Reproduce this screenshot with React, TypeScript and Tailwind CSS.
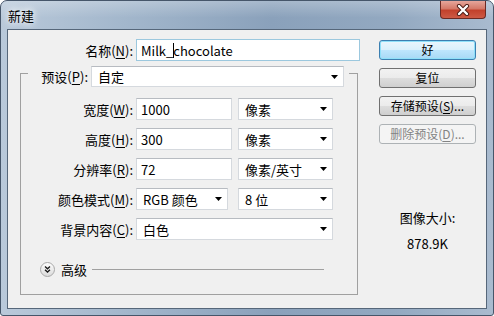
import React from 'react'

const ui = "font-['Noto_Sans_CJK_SC','Liberation_Sans',sans-serif] text-[13px] leading-[15px] text-black"

const Key = ({ k }: { k: string }) => <u className="underline underline-offset-[2px]">{k}</u>

const Label = ({ text, k, w }: { text: string; k: string; w: string }) => (
  <div className={`${w} shrink-0 text-right whitespace-nowrap`}>
    {text}(<Key k={k} />):
  </div>
)

const Arrow = () => (
  <svg width="7" height="4" viewBox="0 0 7 4" className="shrink-0">
    <path d="M0 0h7L3.5 4z" fill="#000" />
  </svg>
)

const Field = ({ value, w }: { value: string; w: string }) => (
  <div className={`${w} h-[22px] shrink-0 bg-white border border-[#d5d9de] border-t-[#b7bbc1] flex items-center pl-[4px]`}>
    {value}
  </div>
)

const Combo = ({ value, w, h = 'h-[22px]' }: { value: string; w: string; h?: string }) => (
  <div className={`${w} ${h} shrink-0 bg-white border border-[#d5d9de] border-t-[#b7bbc1] flex items-center pl-[6px] pr-[5px]`}>
    <span className="flex-1 whitespace-nowrap">{value}</span>
    <Arrow />
  </div>
)

const Button = ({ children, kind = 'normal' }: { children: React.ReactNode; kind?: 'normal' | 'default' | 'disabled' }) => {
  const styles = {
    normal: 'border-[#707070] bg-[linear-gradient(180deg,#f2f2f2_0%,#ebebeb_50%,#dddddd_51%,#cfcfcf_100%)] text-black',
    default:
      'border-[#3c7fb1] bg-[linear-gradient(180deg,#eaf6fd_0%,#d9f0fc_50%,#bee6fd_51%,#a7d9f5_100%)] shadow-[inset_0_0_0_1px_#8fe0f9] text-black',
    disabled: 'border-[#adb2b5] bg-[#f4f4f4] text-[#838383]',
  }
  return (
    <div className={`w-[97px] h-[20px] rounded-[3px] border flex items-center justify-center whitespace-nowrap text-[12px] leading-[14px] ${styles[kind]}`}>
      {children}
    </div>
  )
}

const dimensionRows = [
  { label: '宽度', k: 'W', value: '1000', unit: '像素' },
  { label: '高度', k: 'H', value: '300', unit: '像素' },
  { label: '分辨率', k: 'R', value: '72', unit: '像素/英寸' },
]

const App = () => {
  return (
    <div className={`w-[494px] h-[316px] ${ui}`}>
      <div className="w-full h-full flex flex-col border border-[#46566a] rounded-t-[7px] rounded-b-[3px] overflow-hidden bg-[linear-gradient(90deg,#b9c9da_0%,#a3b7cc_25%,#8aa1bb_55%,#93a9c1_80%,#a9bbcf_100%)]">
        {/* title bar */}
        <div className="h-[28px] shrink-0 flex items-start justify-between bg-[linear-gradient(180deg,rgba(255,255,255,0.25)_0%,rgba(255,255,255,0)_60%)]">
          <div className="pl-[7px] pt-[7px] [text-shadow:0_0_6px_#fff,0_0_10px_#fff]">新建</div>
          <div className="mr-[7px] w-[46px] h-[18px] rounded-b-[4px] border border-t-0 border-[#6b2a24] bg-[linear-gradient(180deg,#e6a69b_0%,#d47968_45%,#c2412c_55%,#cd5a45_100%)] flex items-center justify-center">
            <svg width="14" height="12" viewBox="0 0 14 12">
              <path d="M3 2L11 10M11 2L3 10" stroke="#4a1a14" strokeWidth="4.2" strokeLinecap="round" />
              <path d="M3 2L11 10M11 2L3 10" stroke="#fff" strokeWidth="2.4" strokeLinecap="round" />
            </svg>
          </div>
        </div>

        {/* client area */}
        <div className="mx-[6px] h-[280px] shrink-0 border border-[#56677a] bg-[#f0f0f0] flex">
          {/* left column */}
          <div className="flex flex-col">
            <div className="mt-[9px] flex items-center">
              <Label text="名称" k="N" w="w-[125px]" />
              <div className="ml-[3px] w-[224px] h-[22px] bg-white border border-[#9cc8de] flex items-center pl-[4px] whitespace-nowrap">
                Milk_<span className="inline-block w-px h-[15px] bg-black mr-[-1px]" />chocolate
              </div>
            </div>

            <fieldset className="ml-[12px] mt-[5px] w-[338px] border border-[#a0a0a0] pb-[17px]">
              <legend className="ml-[7px] h-[14px] w-[321px]">
                <div className="flex items-center h-[21px]">
                  <Label text="预设" k="P" w="w-[60px]" />
                  <div className="ml-[3px]">
                    <Combo value="自定" w="w-[253px]" h="h-[21px]" />
                  </div>
                </div>
              </legend>

              <div className="mt-[18px] flex flex-col gap-[8px]">
                {dimensionRows.map(row => (
                  <div key={row.k} className="flex items-center">
                    <Label text={row.label} k={row.k} w="w-[112px]" />
                    <div className="ml-[3px] flex gap-[6px]">
                      <Field value={row.value} w="w-[96px]" />
                      <Combo value={row.unit} w="w-[95px]" />
                    </div>
                  </div>
                ))}
                <div className="flex items-center">
                  <Label text="颜色模式" k="M" w="w-[112px]" />
                  <div className="ml-[3px] flex gap-[10px]">
                    <Combo value="RGB 颜色" w="w-[92px]" />
                    <Combo value="8 位" w="w-[95px]" />
                  </div>
                </div>
                <div className="flex items-center">
                  <Label text="背景内容" k="C" w="w-[112px]" />
                  <div className="ml-[3px]">
                    <Combo value="白色" w="w-[197px]" />
                  </div>
                </div>
              </div>

              <div className="mt-[22px] ml-[19px] h-[15px] flex items-center">
                <svg width="15" height="15" viewBox="0 0 15 15" className="shrink-0">
                  <defs>
                    <linearGradient id="adv" x1="0" y1="0" x2="0" y2="1">
                      <stop offset="0" stopColor="#ffffff" />
                      <stop offset="1" stopColor="#d9d9d9" />
                    </linearGradient>
                  </defs>
                  <circle cx="7.5" cy="7.5" r="7" fill="url(#adv)" stroke="#a8a8a8" />
                  <path d="M5 4.5L7.5 6.8L10 4.5M5 7.8L7.5 10.1L10 7.8" fill="none" stroke="#1a1a1a" strokeWidth="1.3" />
                </svg>
                <span className="ml-[6px]">高级</span>
                <div className="ml-[5px] w-[232px] h-px bg-[#a0a0a0]" />
              </div>
            </fieldset>
          </div>

          {/* right column */}
          <div className="pl-[19px] pt-[10px] flex flex-col">
            <div className="flex flex-col gap-[8px]">
              <Button kind="default">好</Button>
              <Button>复位</Button>
              <Button>
                存储预设(<Key k="S" />)...
              </Button>
              <Button kind="disabled">
                删除预设(<Key k="D" />)...
              </Button>
            </div>
            <div className="mt-[66px] w-[97px] text-center">图像大小:</div>
            <div className="mt-[11px] w-[97px] text-center">878.9K</div>
          </div>
        </div>
      </div>
    </div>
  )
}

export default App
